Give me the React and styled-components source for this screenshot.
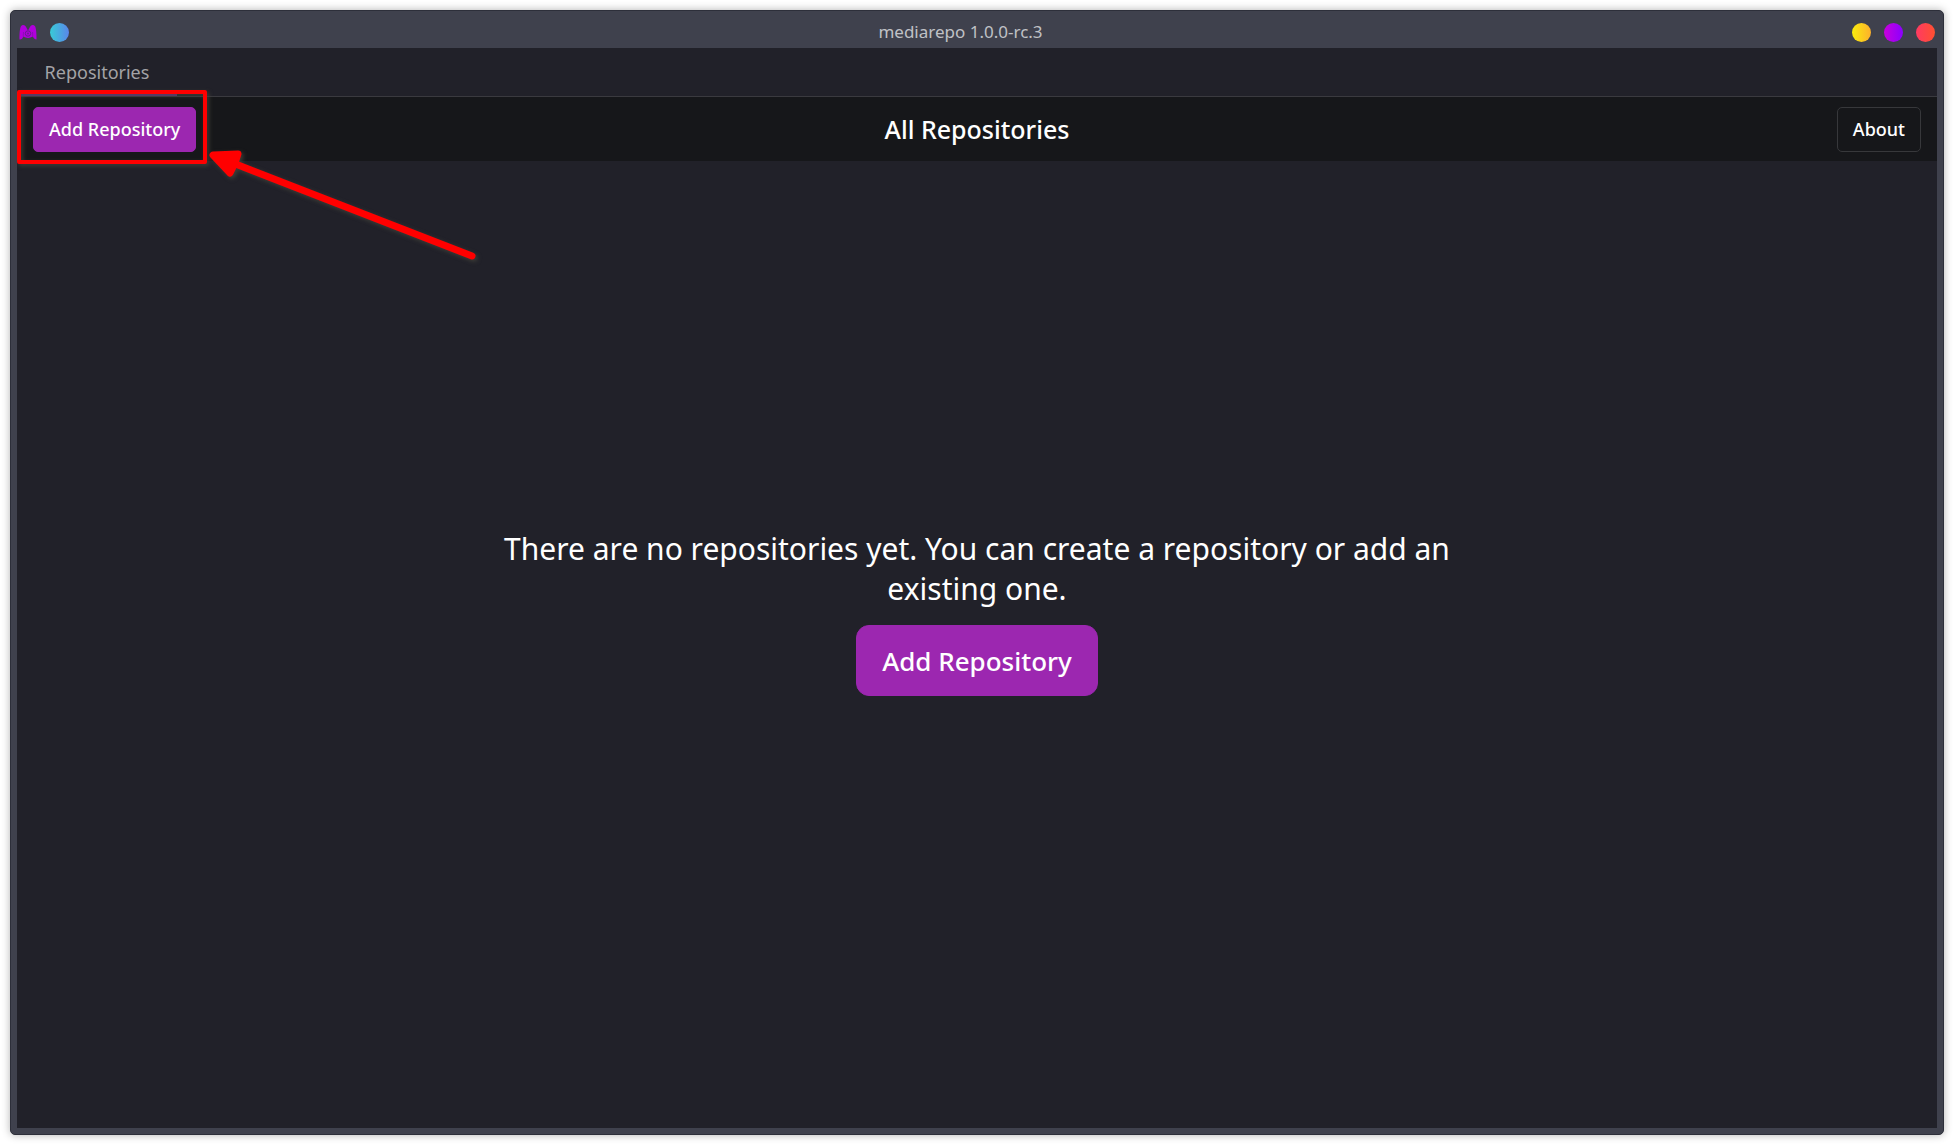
import React from "react";
import styled, { createGlobalStyle } from "styled-components";

const GlobalStyle = createGlobalStyle`
  * { box-sizing: border-box; }
  html, body, #root { height: 100%; }
  body {
    margin: 0;
    background: #fff;
    font-family: "Noto Sans", "Open Sans", sans-serif;
    color: #fff;
  }
  button { font-family: inherit; cursor: pointer; }
`;

const Desktop = styled.div`
  height: 100%;
  padding: 10px;
  display: flex;
`;

const Window = styled.div`
  position: relative;
  flex: 1;
  display: flex;
  flex-direction: column;
  padding: 0 6px 6px;
  border: 1px solid #2d2f3a;
  border-radius: 5px;
  background: #3f414d;
  box-shadow: 0 0 8px rgba(0, 0, 0, 0.3);
`;

const TitleBar = styled.header`
  display: flex;
  align-items: center;
  height: 37px;
  padding-top: 6px;
  flex: none;
`;

const TitleGroup = styled.div`
  display: flex;
  align-items: center;
  gap: 13px;
  padding: 0 2px;
`;

const WindowTitle = styled.h1`
  flex: 1;
  margin: 0;
  padding-bottom: 1px;
  text-align: center;
  font-size: 17px;
  line-height: 24px;
  font-weight: 400;
  color: #c0c1c6;
`;

const WindowButton = styled.button`
  width: 19px;
  height: 19px;
  padding: 0;
  border: 0;
  border-radius: 50%;
  background: linear-gradient(90deg, ${(p) => p.$from}, ${(p) => p.$to});
`;

const Content = styled.div`
  flex: 1;
  display: flex;
  flex-direction: column;
  background: #212129;
`;

const TabBar = styled.nav`
  display: flex;
  height: 49px;
  border-bottom: 1px solid #3a3a3f;
`;

const Tab = styled.button`
  width: 160px;
  padding: 2px 0 0;
  border: 0;
  border-bottom: 2px solid #673086;
  background: none;
  color: #a3a3a6;
  font-size: 18px;
  line-height: 24px;
`;

const Toolbar = styled.div`
  display: grid;
  grid-template-columns: 1fr auto 1fr;
  align-items: center;
  height: 64px;
  padding: 0 16px;
  background: #16171a;
`;

const ToolbarTitle = styled.h2`
  margin: 0;
  font-size: 25px;
  line-height: 40px;
  font-weight: 500;
`;

const Button = styled.button`
  justify-self: ${(p) => p.$align || "start"};
  height: 45px;
  padding: 0 15px;
  border: 1px solid ${(p) => (p.$filled ? "#9c27b0" : "#37383b")};
  border-radius: 5px;
  background: ${(p) => (p.$filled ? "#9c27b0" : "transparent")};
  color: #fff;
  font-size: 18px;
  line-height: 24px;
  font-weight: 500;
`;

const LargeButton = styled(Button)`
  height: 71px;
  padding: 0 25px;
  border-radius: 13px;
  font-size: 26px;
  line-height: 40px;
`;

const EmptyState = styled.main`
  flex: 1;
  display: flex;
  flex-direction: column;
  align-items: center;
  justify-content: center;
  gap: 16px;
  padding-bottom: 64px;
`;

const Message = styled.p`
  width: 50%;
  margin: 0;
  text-align: center;
  font-size: 30px;
  line-height: 40px;
`;

const Annotation = styled.svg`
  position: absolute;
  left: -1px;
  top: 69px;
  pointer-events: none;
  filter: drop-shadow(2px 2px 2px rgba(70, 70, 60, 0.8));
`;

const Logo = () => (
  <svg width="18" height="19" viewBox="0.5 0 18 19" aria-hidden="true">
    <path
      d="M1 16.500C0.800 11 1.400 5 2.500 3.200C3.500 1.800 5.500 1.700 6.600 2.800C7.800 4 8.700 6.500 9.500 7.500C10.300 6.500 11.200 4 12.400 2.800C13.500 1.700 15.500 1.800 16.500 3.200C17.600 5 18.200 11 18 16.500C16.500 16.500 15.300 15.500 14.300 13.500Q9.500 16.300 4.700 13.500C4.200 15.300 3 16.800 1 16.500Z"
      fill="#b100dc"
    />
    <circle cx="9.500" cy="10.500" r="2.700" fill="none" stroke="#6a1a90" strokeWidth="1" />
    <circle cx="9.500" cy="10.500" r="0.900" fill="#6a1a90" />
    <path d="M4.700 13.500L5 9M14.300 13.500L14 9" stroke="#7d12a6" strokeWidth="0.700" fill="none" />
  </svg>
);

export default function App() {
  return (
    <>
      <GlobalStyle />
      <Desktop>
        <Window>
          <TitleBar>
            <TitleGroup>
              <Logo />
              <WindowButton $from="#38cbd6" $to="#5a86ea" aria-label="Pin" />
            </TitleGroup>
            <WindowTitle>mediarepo 1.0.0-rc.3</WindowTitle>
            <TitleGroup>
              <WindowButton $from="#f9ec0c" $to="#fdb02c" aria-label="Minimize" />
              <WindowButton $from="#c800dc" $to="#8a00ff" aria-label="Maximize" />
              <WindowButton $from="#ff3a63" $to="#ff5030" aria-label="Close" />
            </TitleGroup>
          </TitleBar>
          <Content>
            <TabBar>
              <Tab>Repositories</Tab>
            </TabBar>
            <Toolbar>
              <Button $filled>Add Repository</Button>
              <ToolbarTitle>All Repositories</ToolbarTitle>
              <Button $align="end">About</Button>
            </Toolbar>
            <EmptyState>
              <Message>
                There are no repositories yet. You can create a repository or add an existing one.
              </Message>
              <LargeButton $filled>Add Repository</LargeButton>
            </EmptyState>
          </Content>
          <Annotation width="480" height="190" viewBox="10 80 480 190" aria-hidden="true">
            <rect x="19" y="92" width="186" height="70" fill="none" stroke="#f00" strokeWidth="4" strokeLinejoin="round" />
            <path d="M233 163L472 256" stroke="#f00" strokeWidth="7" strokeLinecap="round" />
            <path d="M213 155L238 154L235 163L230 173Z" fill="#f00" stroke="#f00" strokeWidth="7" strokeLinejoin="round" />
          </Annotation>
        </Window>
      </Desktop>
    </>
  );
}
